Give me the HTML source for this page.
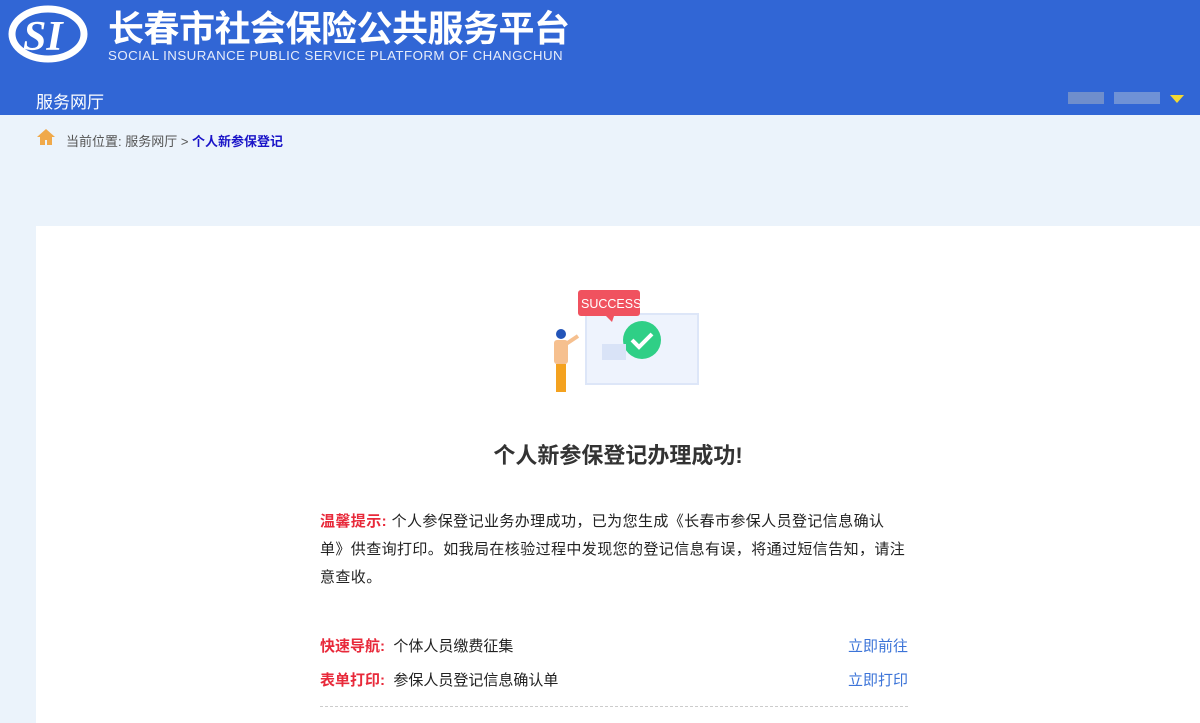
<!DOCTYPE html>
<html><head><meta charset="utf-8"><style>
*{margin:0;padding:0;box-sizing:border-box}
body{width:1200px;height:723px;overflow:hidden;background:#ebf3fb;font-family:"Liberation Sans","Noto Sans CJK SC",sans-serif;position:relative}
.hd{position:absolute;left:0;top:0;width:1200px;height:115px;background:#3166d5}
.t1{position:absolute;left:108px;top:0px;color:#fff;font-size:36px;font-weight:bold;letter-spacing:-0.5px;white-space:nowrap}
.t2{position:absolute;left:108px;top:48px;color:#e6ecfa;font-size:13.3px;letter-spacing:.45px;white-space:nowrap}
.nav{position:absolute;left:36px;top:88px;color:#fff;font-size:17px}
.bc{position:absolute;left:66px;top:131px;font-size:13px;color:#555}
.bc b{color:#1a14c8}
.card{position:absolute;left:36px;top:226px;width:1164px;height:497px;background:#fff}
.ttl{position:absolute;left:0;width:1164px;top:212px;text-align:center;font-size:22px;font-weight:bold;color:#333}
.red{color:#e8293a;font-weight:bold}
.tip{position:absolute;left:284px;top:282px;font-size:15px;letter-spacing:0.4px;line-height:28px;color:#222;white-space:nowrap}
.row{position:absolute;left:284px;width:588px;font-size:15px;color:#222}
.row a{position:absolute;right:0;color:#3c74d8;text-decoration:none}
.line{position:absolute;left:284px;top:480px;width:588px;border-top:1px dashed #ccc}
</style></head><body>
<div class="hd">
<svg style="position:absolute;left:7px;top:5px" width="82" height="58" viewBox="0 0 82 58"><ellipse cx="41" cy="29" rx="36" ry="25" fill="none" stroke="#fff" stroke-width="7"/><text x="16" y="45" font-family="Liberation Serif" font-style="italic" font-weight="bold" font-size="42" fill="#fff">SI</text></svg>
<div class="t1">长春市社会保险公共服务平台</div>
<div class="t2">SOCIAL INSURANCE PUBLIC SERVICE PLATFORM OF CHANGCHUN</div>
<div class="nav">服务网厅</div>
<div style="position:absolute;left:1068px;top:92px;width:36px;height:12px;background:#8a9fc8;opacity:.7"></div>
<div style="position:absolute;left:1114px;top:92px;width:46px;height:12px;background:#7f9ed6;opacity:.8"></div>
<div style="position:absolute;left:1170px;top:95px;width:0;height:0;border-left:7px solid transparent;border-right:7px solid transparent;border-top:8px solid #f2d832"></div>
</div>
<svg style="position:absolute;left:36px;top:128px" width="20" height="18" viewBox="0 0 20 18"><path d="M10 1L1 9h3v8h5v-5h2v5h5V9h3z" fill="#f0a94a"/></svg>
<div class="bc">当前位置: 服务网厅 &gt; <b>个人新参保登记</b></div>
<div class="card">
<svg style="position:absolute;left:490px;top:58px" width="180" height="120" viewBox="0 0 180 120">
<rect x="60" y="30" width="112" height="70" fill="#eef3fd" stroke="#dde6f8" stroke-width="2"/>
<rect x="52" y="6" width="62" height="26" rx="3" fill="#f0525f"/><path d="M80 32l8 0-2 6z" fill="#f0525f"/>
<text x="55" y="24" font-size="12.5" fill="#fff" font-family="Liberation Sans">SUCCESS</text>
<circle cx="116" cy="56" r="19" fill="#2fcf86"/><path d="M106 56l7 7 13-13" stroke="#fff" stroke-width="4" fill="none"/>
<rect x="76" y="60" width="24" height="16" fill="#d9e3f7"/>
<circle cx="35" cy="50" r="5" fill="#2354b8"/><rect x="28" y="56" width="14" height="24" rx="3" fill="#f6c08f"/>
<rect x="30" y="80" width="10" height="28" fill="#f4a21f"/><path d="M40 60l12-8" stroke="#f6c08f" stroke-width="4"/>
</svg>
<div class="ttl">个人新参保登记办理成功!</div>
<div class="tip"><span class="red">温馨提示:</span> 个人参保登记业务办理成功，已为您生成《长春市参保人员登记信息确认<br>单》供查询打印。如我局在核验过程中发现您的登记信息有误，将通过短信告知，请注<br>意查收。</div>
<div class="row" style="top:409px"><span class="red">快速导航:</span>&nbsp;&nbsp;个体人员缴费征集<a>立即前往</a></div>
<div class="row" style="top:443px"><span class="red">表单打印:</span>&nbsp;&nbsp;参保人员登记信息确认单<a>立即打印</a></div>
<div class="line"></div>
</div>
</body></html>
